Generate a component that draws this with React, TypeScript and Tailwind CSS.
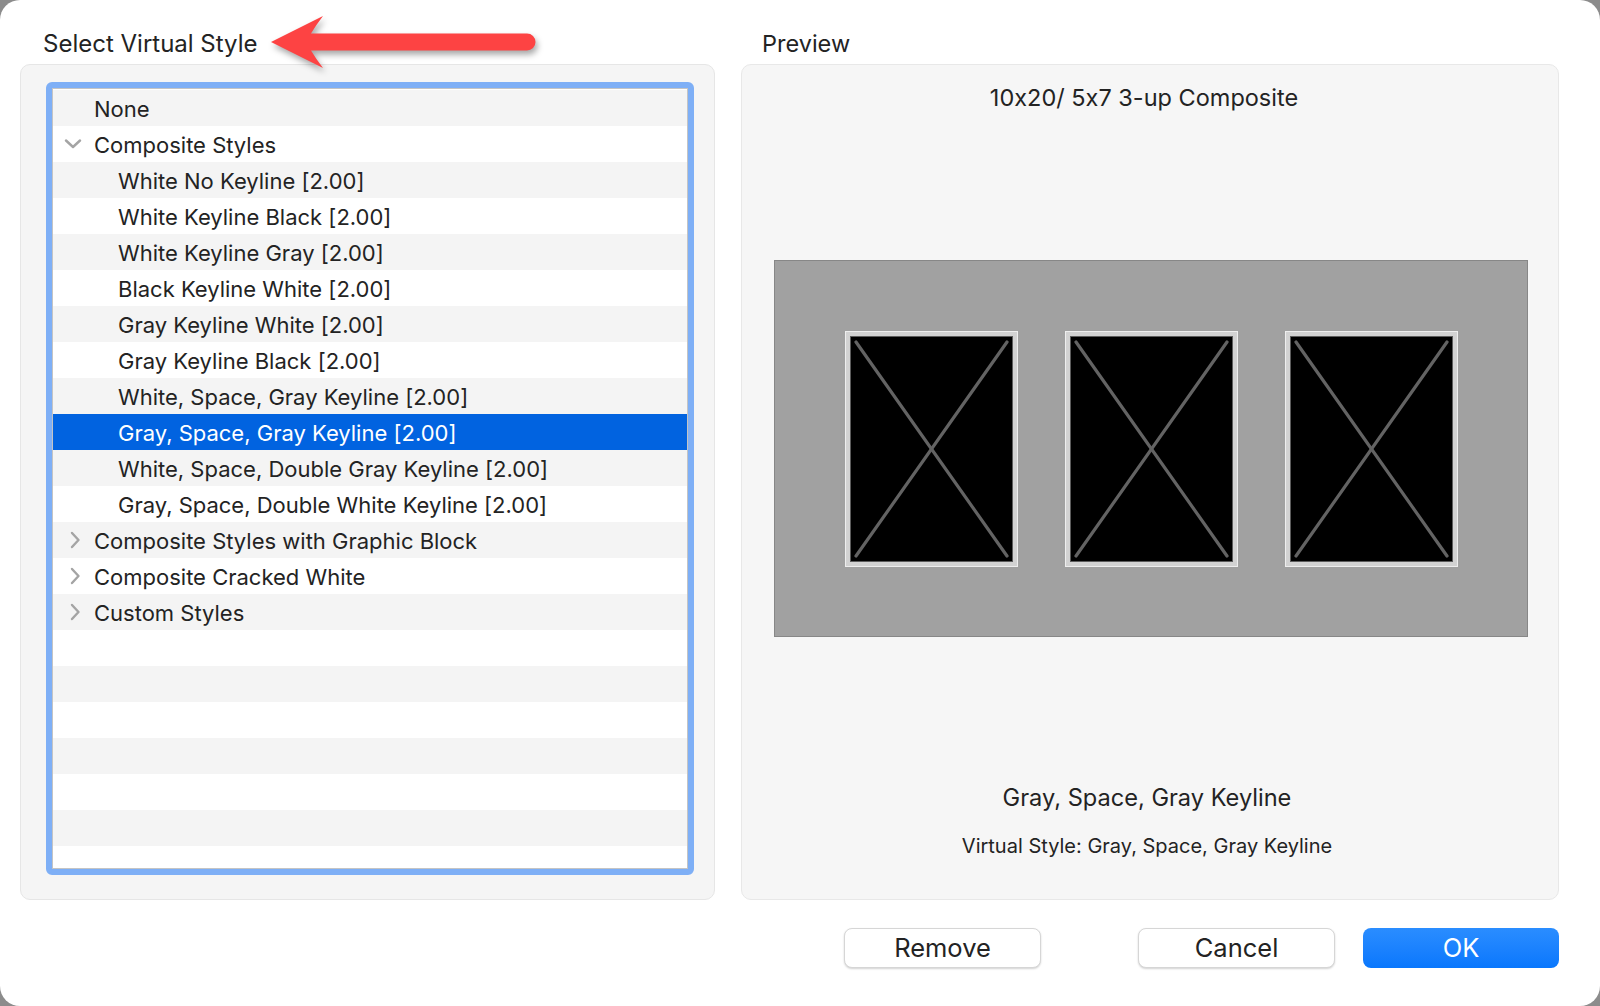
import React from "react";

type Row = { label: string; depth: 0 | 1; chevron?: "down" | "right" };

const rows: Row[] = [
  { label: "None", depth: 0 },
  { label: "Composite Styles", depth: 0, chevron: "down" },
  { label: "White No Keyline [2.00]", depth: 1 },
  { label: "White Keyline Black [2.00]", depth: 1 },
  { label: "White Keyline Gray [2.00]", depth: 1 },
  { label: "Black Keyline White [2.00]", depth: 1 },
  { label: "Gray Keyline White [2.00]", depth: 1 },
  { label: "Gray Keyline Black [2.00]", depth: 1 },
  { label: "White, Space, Gray Keyline [2.00]", depth: 1 },
  { label: "Gray, Space, Gray Keyline [2.00]", depth: 1 },
  { label: "White, Space, Double Gray Keyline [2.00]", depth: 1 },
  { label: "Gray, Space, Double White Keyline [2.00]", depth: 1 },
  { label: "Composite Styles with Graphic Block", depth: 0, chevron: "right" },
  { label: "Composite Cracked White", depth: 0, chevron: "right" },
  { label: "Custom Styles", depth: 0, chevron: "right" },
];

const SELECTED = 9;
const TOTAL_ROWS = 22;

function Chevron({ dir }: { dir: "down" | "right" }) {
  if (dir === "down") {
    return (
      <svg width="18" height="10" viewBox="0 0 18 10" className="absolute left-[11px] top-[13px]">
        <path d="M2 1.5 L9 8 L16 1.5" fill="none" stroke="#a4a4a4" strokeWidth="2.4" strokeLinecap="round" strokeLinejoin="round" />
      </svg>
    );
  }
  return (
    <svg width="12" height="18" viewBox="0 0 12 18" className="absolute left-[16px] top-[9px]">
      <path d="M3 2 L9.5 9 L3 16" fill="none" stroke="#a4a4a4" strokeWidth="2.4" strokeLinecap="round" strokeLinejoin="round" />
    </svg>
  );
}

function Frame() {
  return (
    <div className="w-[173px] h-[236px] bg-[#d2d2d2] border border-[#eeeeee] p-[4px]">
      <div className="w-full h-full bg-black border border-[#5c5c5c]">
        <svg viewBox="0 0 161 224" className="w-full h-full" preserveAspectRatio="none">
          <line x1="5" y1="5" x2="156" y2="219" stroke="#636363" strokeWidth="3.2" strokeLinecap="round" />
          <line x1="156" y1="5" x2="5" y2="219" stroke="#636363" strokeWidth="3.2" strokeLinecap="round" />
        </svg>
      </div>
    </div>
  );
}

function Arrow() {
  return (
    <svg
      width="300"
      height="90"
      viewBox="260 0 300 90"
      className="absolute left-[260px] top-0"
      style={{ filter: "drop-shadow(2px 4px 3px rgba(0,0,0,0.35))" }}
    >
      <path
        d="M271 42 L323 16 Q316 25 311 33.5 L527 33.5 A8.5 8.5 0 0 1 527 50.5 L311 50.5 Q316 59 323 68 Z"
        fill="#fd4343"
      />
    </svg>
  );
}

export default function App() {
  return (
    <div className="w-[1600px] h-[1006px] bg-[#8c8c8c] font-['Inter','Noto_Sans',sans-serif] [font-feature-settings:'calt'_0] text-[#232323]">
      <div className="relative w-full h-full bg-white rounded-[20px] pl-[20px] pr-[41px] flex flex-col">
        <div className="flex gap-[26px]">
          {/* left column */}
          <div className="w-[695px] flex flex-col">
            <div className="h-[64px] pt-[29px] pl-[23px] text-[24px] leading-[30px]">Select Virtual Style</div>
            <div className="h-[836px] bg-[#f5f5f5] border border-[#e6e6e6] rounded-[10px] pt-[17px] pl-[25px] pr-[20px]">
              <div className="h-[793px] border-[6px] border-[#7eaff6] rounded-[6px] bg-white">
                <div className="h-full border border-[#c4c4c4] overflow-hidden pt-[1px]">
                  {Array.from({ length: TOTAL_ROWS }).map((_, i) => {
                    const r = rows[i];
                    const selected = i === SELECTED;
                    const bg = selected ? "bg-[#0163e0] text-white" : i % 2 === 0 ? "bg-[#f4f4f4]" : "bg-white";
                    return (
                      <div key={i} className={`relative h-[36px] flex items-center text-[22px] pt-[2px] ${bg}`}>
                        {r?.chevron ? <Chevron dir={r.chevron} /> : null}
                        {r ? <span className={r.depth === 1 ? "pl-[65px]" : "pl-[41px]"}>{r.label}</span> : null}
                      </div>
                    );
                  })}
                </div>
              </div>
            </div>
          </div>

          {/* right column */}
          <div className="w-[818px] flex flex-col">
            <div className="h-[64px] pt-[29px] pl-[21px] text-[23.5px] leading-[30px]">Preview</div>
            <div className="h-[836px] bg-[#f6f6f6] border border-[#e8e8e8] rounded-[10px] flex flex-col items-center">
              <div className="mt-[18px] mr-[12px] h-[30px] leading-[30px] text-[23.5px]">10x20/ 5x7 3-up Composite</div>
              <div className="mt-[147px] w-[754px] h-[377px] ml-[2px] bg-[#a1a1a1] border border-[#878787] flex items-center justify-center gap-[47px]">
                <Frame />
                <Frame />
                <Frame />
              </div>
              <div className="mt-[146px] mr-[6px] h-[30px] leading-[30px] text-[23.6px]">Gray, Space, Gray Keyline</div>
              <div className="mt-[20px] mr-[6px] h-[26px] leading-[26px] text-[20px]">Virtual Style: Gray, Space, Gray Keyline</div>
            </div>
          </div>
        </div>

        {/* buttons */}
        <div className="flex justify-end mt-[28px]">
          <button className="w-[197px] h-[40px] rounded-[8px] bg-white border border-[#d6d6d6] shadow-[0_1px_2px_rgba(0,0,0,0.18)] text-[25.5px] leading-none text-[#232323]">
            Remove
          </button>
          <button className="ml-[97px] w-[197px] h-[40px] rounded-[8px] bg-white border border-[#d6d6d6] shadow-[0_1px_2px_rgba(0,0,0,0.18)] text-[25.5px] leading-none text-[#232323]">
            Cancel
          </button>
          <button className="ml-[28px] w-[196px] h-[40px] rounded-[8px] bg-gradient-to-b from-[#2a8dff] to-[#0877fd] text-[25.5px] leading-none text-white">
            OK
          </button>
        </div>

        <Arrow />
      </div>
    </div>
  );
}
